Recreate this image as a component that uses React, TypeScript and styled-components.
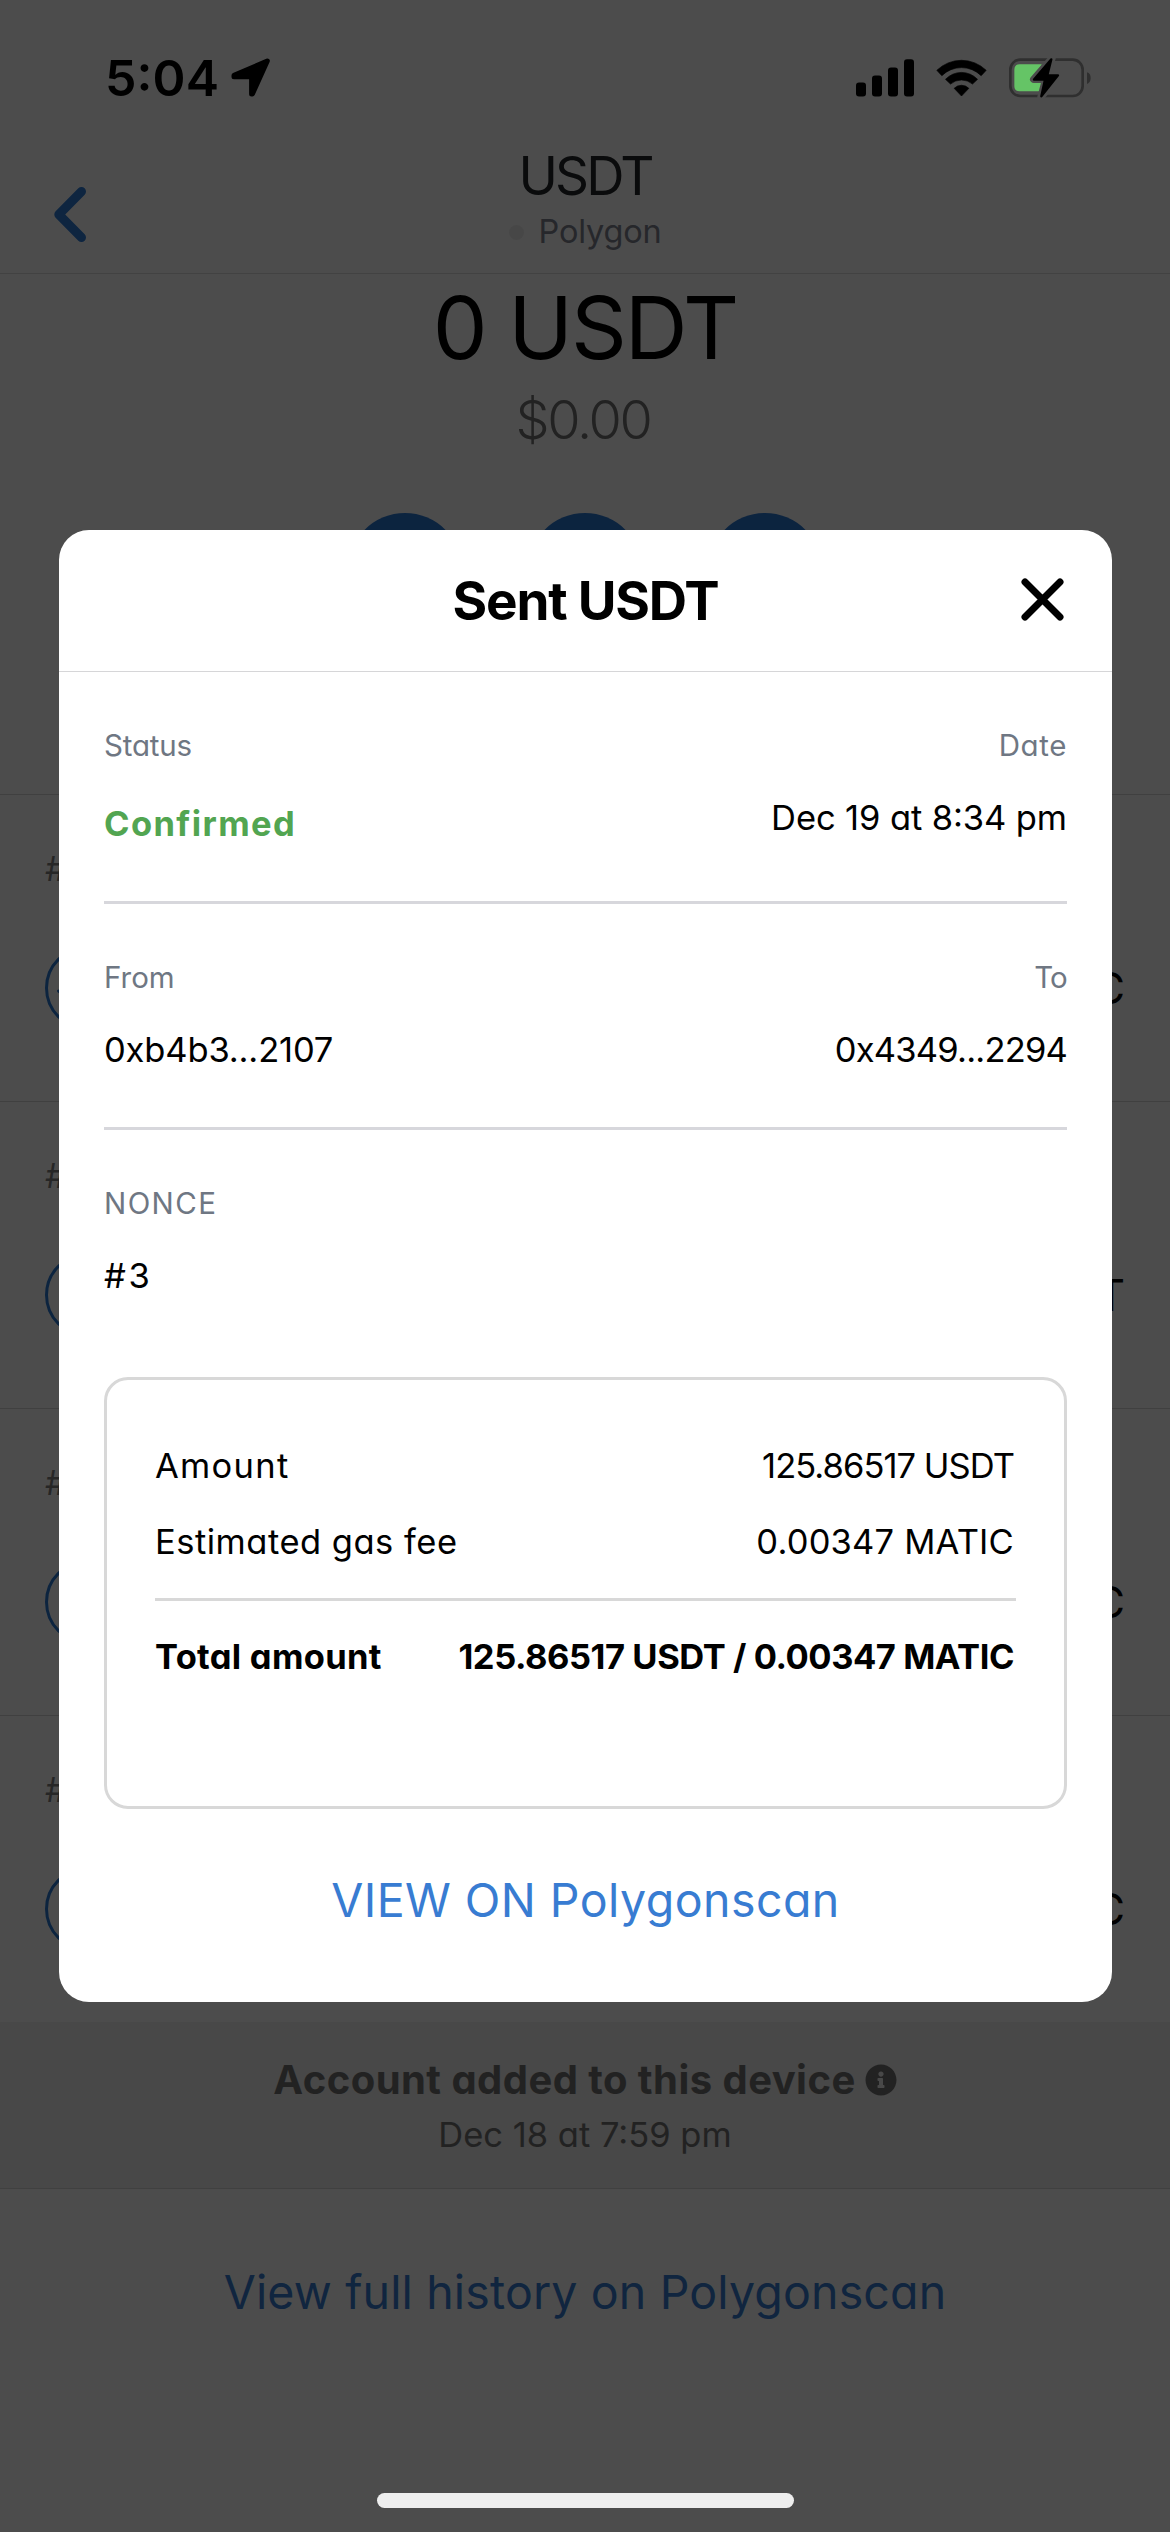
import React from "react";
import styled, { createGlobalStyle } from "styled-components";
import { FaInfoCircle } from "react-icons/fa";

const GlobalStyle = createGlobalStyle`
  *, *::before, *::after { box-sizing: border-box; }
  body {
    margin: 0;
    background: #fff;
    color: #000;
    font-family: Inter, "Noto Sans", sans-serif;
    font-feature-settings: "cv11", "calt";
  }
`;

const BLUE = "#387cd2";

const Screen = styled.div`
  position: relative;
  display: flex;
  flex-direction: column;
  width: 1170px;
  height: 2532px;
  overflow: hidden;
  background: #fff;
`;

const StatusBar = styled.header`
  position: relative;
  z-index: 2;
  display: flex;
  align-items: center;
  height: 132px;
  padding: 24px 79px 0 105px;
`;

const Clock = styled.span`
  font-size: 50px;
  font-weight: 600;
  line-height: 60px;
  letter-spacing: 0.1px;
  margin-right: 12px;
`;

const StatusIcons = styled.div`
  display: flex;
  align-items: center;
  gap: 22px;
  margin-left: auto;
`;

const NavBar = styled.nav`
  display: grid;
  grid-template-columns: 200px 1fr 200px;
  height: 142px;
  padding-top: 15px;
  border-bottom: 1px solid #dcdcde;
`;

const BackButton = styled.div`
  padding: 40px 0 0 54px;
`;

const NavTitle = styled.div`
  display: flex;
  flex-direction: column;
  align-items: center;
  gap: 10px;
  padding-top: 1px;
`;

const TokenName = styled.div`
  color: #24272a;
  font-size: 53px;
  line-height: 56px;
  letter-spacing: -2.8px;
`;

const Network = styled.div`
  display: flex;
  align-items: center;
  gap: 15px;
  color: #7f8490;
  font-size: 32.5px;
  line-height: 36px;
  letter-spacing: -0.2px;
`;

const NetworkDot = styled.span`
  width: 15px;
  height: 15px;
  border-radius: 50%;
  background: #eeeeee;
`;

const Hero = styled.section`
  display: flex;
  flex-direction: column;
  align-items: center;
  height: 520px;
  padding-top: 4px;
`;

const Balance = styled.div`
  font-size: 87px;
  line-height: 100px;
  letter-spacing: -2px;
`;

const FiatBalance = styled.div`
  margin: 12px 4px 0 0;
  color: #747474;
  font-size: 54px;
  font-weight: 300;
  line-height: 60px;
  letter-spacing: -2.3px;
`;

const Actions = styled.div`
  display: flex;
  gap: 66px;
  margin-top: 63px;
`;

const ActionCircle = styled.span`
  width: 114px;
  height: 114px;
  border-radius: 50%;
  background: #2b78d2;
`;

const HistoryRow = styled.article`
  display: flex;
  flex-direction: column;
  gap: 57px;
  height: 307px;
  padding: 54px 45px 0;
  border-top: 1px solid #d6d6d6;
`;

const RowNumber = styled.div`
  color: #808080;
  font-size: 34.5px;
  line-height: 40px;
`;

const RowMain = styled.div`
  display: flex;
  align-items: center;
  justify-content: space-between;
  height: 84px;
`;

const RowIcon = styled.div`
  display: flex;
  width: 84px;
  height: 84px;
  border: 3px solid #2b78d2;
  border-radius: 50%;
`;

const RowUnit = styled.span`
  font-size: 43.5px;
  line-height: 60px;
`;

const AccountBand = styled.section`
  display: flex;
  flex-direction: column;
  align-items: center;
  gap: 7px;
  height: 167px;
  padding-top: 32px;
  background: #f0f0f0;
  border-bottom: 1px solid #d6d6d6;
  color: #747474;
`;

const BandTitle = styled.div`
  display: flex;
  align-items: center;
  gap: 9px;
  font-size: 40px;
  font-weight: 700;
  line-height: 52px;
  letter-spacing: 0.45px;
`;

const BandDate = styled.div`
  font-size: 34.5px;
  line-height: 44px;
  letter-spacing: 0;
`;

const HistoryLink = styled.div`
  margin-top: 73px;
  color: ${BLUE};
  font-size: 46.5px;
  line-height: 60px;
  letter-spacing: 0.15px;
  text-align: center;
`;

const Overlay = styled.div`
  position: absolute;
  inset: 0;
  z-index: 1;
  padding: 530px 58px 0 59px;
  background: rgba(0, 0, 0, 0.7);
`;

const Modal = styled.section`
  height: 1472px;
  border-radius: 30px;
  background: #fff;
`;

const ModalHeader = styled.div`
  display: grid;
  grid-template-columns: 1fr auto 1fr;
  align-items: center;
  height: 142px;
  padding: 0 48px;
  border-bottom: 1px solid #d6d6d8;
`;

const ModalTitle = styled.h1`
  grid-column: 2;
  margin: 0;
  font-size: 53px;
  font-weight: 700;
  line-height: 60px;
  letter-spacing: -1.2px;
`;

const CloseButton = styled.div`
  display: flex;
  justify-self: end;
  margin-top: -3px;
`;

const ModalBody = styled.div`
  display: flex;
  flex-direction: column;
  padding: 0 45px;
`;

const Section = styled.div<{ $height: number; $divided?: boolean }>`
  display: flex;
  justify-content: space-between;
  height: ${(p) => p.$height}px;
  padding-top: 55px;
  border-bottom: ${(p) => (p.$divided ? "3px solid #d7d7dc" : "none")};
`;

const Field = styled.div<{ $end?: boolean }>`
  display: flex;
  flex-direction: column;
  align-items: ${(p) => (p.$end ? "flex-end" : "flex-start")};
  gap: 34px;
`;

const Label = styled.div<{ $track?: number }>`
  color: #6f7783;
  font-size: 29.5px;
  line-height: 36px;
  letter-spacing: ${(p) => p.$track ?? 0}px;
`;

const Value = styled.div<{ $track?: number }>`
  font-size: 34.5px;
  line-height: 42px;
  letter-spacing: ${(p) => p.$track ?? 0}px;
`;

const Confirmed = styled(Value)`
  padding-top: 6px;
  color: #52a551;
  font-weight: 700;
`;

const Summary = styled.div`
  height: 432px;
  padding: 48px;
  border: 3px solid #d8d8d8;
  border-radius: 24px;
`;

const SummaryRow = styled.div<{ $total?: boolean }>`
  display: flex;
  align-items: center;
  justify-content: space-between;
  height: 76px;
  padding-right: 2px;
  font-weight: ${(p) => (p.$total ? 700 : 400)};
`;

const SummaryRule = styled.div`
  height: 3px;
  margin: 18px 0;
  background: #d8d8d8;
`;

const ExplorerLink = styled.div`
  margin-top: 61px;
  color: ${BLUE};
  font-size: 46.5px;
  line-height: 60px;
  letter-spacing: 0.45px;
  text-align: center;
`;

const HomeIndicator = styled.div`
  position: absolute;
  z-index: 2;
  bottom: 24px;
  left: 377px;
  width: 417px;
  height: 15px;
  border-radius: 8px;
  background: #eeeeee;
`;

const LocationArrow = () => (
  <svg width="40" height="40" viewBox="0 0 40 40">
    <path
      d="M36.3 3 3 17.4v1.4h17.6V36h.8z"
      fill="#000"
      stroke="#000"
      strokeWidth="5"
      strokeLinejoin="round"
    />
  </svg>
);

const SignalBars = () => (
  <svg width="58" height="38" viewBox="0 0 58 38">
    <rect x="0" y="23.5" width="10" height="14" rx="3" />
    <rect x="16" y="16.5" width="10" height="21" rx="3" />
    <rect x="32" y="8.5" width="10" height="29" rx="3" />
    <rect x="48" y="0.3" width="10" height="37.2" rx="3" />
  </svg>
);

const Wifi = () => (
  <svg width="51" height="38" viewBox="-1 -1 152 114">
    <g stroke="#000" strokeWidth="2" strokeLinejoin="round">
      <path d="M1 33A106 106 0 0 1 149 33L134 49A84 84 0 0 0 16 49Z" />
      <path d="M27 60A66 66 0 0 1 123 60L108 74A51 51 0 0 0 42 74Z" />
      <path d="M53 87A31 31 0 0 1 97 87L75 110Z" />
    </g>
  </svg>
);

const Battery = () => (
  <svg width="82" height="42" viewBox="508 50 246 126">
    <defs>
      <mask id="boltGap">
        <rect x="500" y="40" width="260" height="140" fill="#fff" />
        <path
          d="M637 54 582 117h36L604 170 657 105H622Z"
          fill="#000"
          stroke="#000"
          strokeWidth="22"
          strokeLinejoin="round"
        />
      </mask>
    </defs>
    <g mask="url(#boltGap)">
      <rect x="512" y="58" width="217" height="109" rx="30" fill="none" stroke="#2f2f2f" strokeWidth="8" />
      <path d="M540 72H606V153H540Q524 153 524 137V88Q524 72 540 72Z" fill="#65c466" />
    </g>
    <path d="M742 96Q753 100 753 113T742 131Z" fill="#2f2f2f" />
    <path
      d="M635 57 583 117.500H616L605 168 655 105H623Z"
      fill="#000"
      stroke="#000"
      strokeWidth="7"
      strokeLinejoin="round"
    />
  </svg>
);

const BackChevron = () => (
  <svg width="32" height="55" viewBox="0 0 32 55" fill="none">
    <path d="M27.500 4.500 4.800 27.500 27.500 50.500" stroke="#2f7cd6" strokeWidth="9" strokeLinecap="round" strokeLinejoin="round" />
  </svg>
);

const CloseIcon = () => (
  <svg width="43" height="43" viewBox="0 0 43 43" fill="none">
    <path d="M4 4 39 39M39 4 4 39" stroke="#000" strokeWidth="7" strokeLinecap="round" />
  </svg>
);

const ReceivedArrow = () => (
  <svg width="78" height="78" viewBox="0 0 78 78" fill="none">
    <path d="M39 20V58M10.500 42 39 64 67.500 42" stroke="#2b78d2" strokeWidth="3" strokeLinecap="round" />
  </svg>
);

const history = [
  { unit: "C", received: true },
  { unit: "T", received: false },
  { unit: "C", received: false },
  { unit: "C", received: false },
];

export default function App() {
  return (
    <Screen>
      <GlobalStyle />
      <StatusBar>
        <Clock>5:04</Clock>
        <LocationArrow />
        <StatusIcons>
          <SignalBars />
          <Wifi />
          <Battery />
        </StatusIcons>
      </StatusBar>

      <NavBar>
        <BackButton>
          <BackChevron />
        </BackButton>
        <NavTitle>
          <TokenName>USDT</TokenName>
          <Network>
            <NetworkDot />
            Polygon
          </Network>
        </NavTitle>
      </NavBar>

      <Hero>
        <Balance>0 USDT</Balance>
        <FiatBalance>$0.00</FiatBalance>
        <Actions>
          <ActionCircle />
          <ActionCircle />
          <ActionCircle />
        </Actions>
      </Hero>

      {history.map((row, index) => (
        <HistoryRow key={index}>
          <RowNumber>#</RowNumber>
          <RowMain>
            <RowIcon>{row.received && <ReceivedArrow />}</RowIcon>
            <RowUnit>{row.unit}</RowUnit>
          </RowMain>
        </HistoryRow>
      ))}

      <AccountBand>
        <BandTitle>
          Account added to this device
          <FaInfoCircle size={32} />
        </BandTitle>
        <BandDate>Dec 18 at 7:59 pm</BandDate>
      </AccountBand>
      <HistoryLink>View full history on Polygonscan</HistoryLink>

      <Overlay>
        <Modal>
          <ModalHeader>
            <ModalTitle>Sent USDT</ModalTitle>
            <CloseButton>
              <CloseIcon />
            </CloseButton>
          </ModalHeader>
          <ModalBody>
            <Section $height={232} $divided>
              <Field>
                <Label $track={-0.2}>Status</Label>
                <Confirmed $track={1.4}>Confirmed</Confirmed>
              </Field>
              <Field $end>
                <Label $track={0.6}>Date</Label>
                <Value $track={-0.1}>Dec 19 at 8:34 pm</Value>
              </Field>
            </Section>
            <Section $height={226} $divided>
              <Field>
                <Label>From</Label>
                <Value $track={-0.15}>0xb4b3...2107</Value>
              </Field>
              <Field $end>
                <Label $track={-0.8}>To</Label>
                <Value $track={-0.8}>0x4349...2294</Value>
              </Field>
            </Section>
            <Section $height={247}>
              <Field>
                <Label $track={1.4}>NONCE</Label>
                <Value $track={2.6}>#3</Value>
              </Field>
            </Section>
            <Summary>
              <SummaryRow>
                <Value $track={1.3}>Amount</Value>
                <Value $track={-0.95}>125.86517 USDT</Value>
              </SummaryRow>
              <SummaryRow>
                <Value $track={0.5}>Estimated gas fee</Value>
                <Value $track={0.2}>0.00347 MATIC</Value>
              </SummaryRow>
              <SummaryRule />
              <SummaryRow $total>
                <Value $track={0.3}>Total amount</Value>
                <Value $track={-0.45}>125.86517 USDT / 0.00347 MATIC</Value>
              </SummaryRow>
            </Summary>
            <ExplorerLink>VIEW ON Polygonscan</ExplorerLink>
          </ModalBody>
        </Modal>
      </Overlay>
      <HomeIndicator />
    </Screen>
  );
}
